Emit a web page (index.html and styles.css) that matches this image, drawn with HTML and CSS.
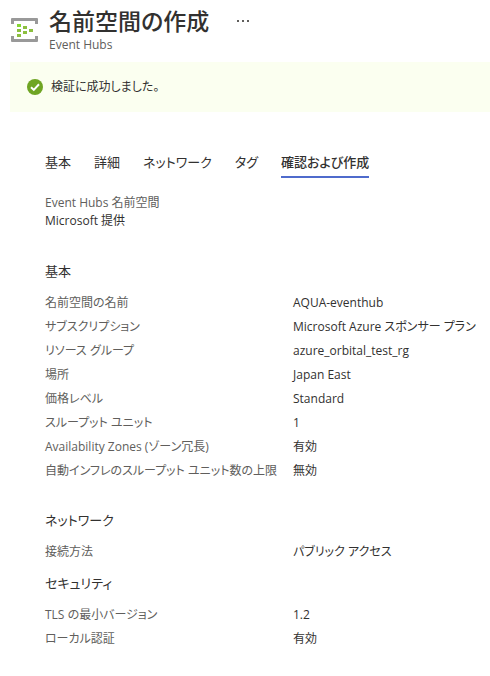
FILE: index.html
```html
<!DOCTYPE html>
<html lang="ja">
<head>
    <meta charset="UTF-8">
    <meta name="viewport" content="width=device-width, initial-scale=1.0">
    <title>名前空間の作成</title>
    <link rel="stylesheet" href="styles.css">
</head>
<body>
    <header class="header">
        <svg class="hub-icon" viewBox="0 0 28 24" aria-hidden="true">
            <path fill="#999" d="M2 0h25a1 1 0 0 1 1 1v5h-3V3H4v3H1V1a1 1 0 0 1 1-1zM1 18h3v3h21v-3h3v5a1 1 0 0 1-1 1H2a1 1 0 0 1-1-1z"/>
            <path fill="#86d633" d="M7 6h4v3H7z"/>
            <path fill="#8cbf3f" d="M7 11h4v3H7zM7 16h4v3H7zM13 8h4v3h-4zM13 13h4v3h-4zM19 11h4v3h-4z"/>
        </svg>
        <div class="heading">
            <div class="title-row">
                <h1>名前空間の作成</h1>
                <button class="more" type="button" aria-label="その他">
                    <svg viewBox="0 0 12 4" aria-hidden="true">
                        <path fill="#605e5c" d="M0 1h2v2H0zM5 1h2v2H5zM10 1h2v2h-2z"/>
                    </svg>
                </button>
            </div>
            <p class="subtitle">Event Hubs</p>
        </div>
    </header>

    <div class="banner" role="status">
        <svg class="check" viewBox="0 0 16 16" aria-hidden="true">
            <circle cx="8" cy="8" r="8" fill="#6fa523"/>
            <path fill="none" stroke="#fff" stroke-width="2" d="M4 8.2l2.8 2.7L12 5.3"/>
        </svg>
        <span>検証に成功しました。</span>
    </div>

    <main class="content">
        <nav class="tabs" role="tablist">
            <button class="tab" type="button" role="tab">基本</button>
            <button class="tab" type="button" role="tab">詳細</button>
            <button class="tab" type="button" role="tab">ネットワーク</button>
            <button class="tab" type="button" role="tab">タグ</button>
            <button class="tab active" type="button" role="tab" aria-selected="true">確認および作成</button>
        </nav>

        <div class="product">
            <p class="product-name">Event Hubs 名前空間</p>
            <p>Microsoft 提供</p>
        </div>

        <section class="section basics">
            <h2>基本</h2>
            <dl>
                <dt>名前空間の名前</dt>
                <dd>AQUA-eventhub</dd>
                <dt>サブスクリプション</dt>
                <dd>Microsoft Azure スポンサー プラン</dd>
                <dt>リソース グループ</dt>
                <dd>azure_orbital_test_rg</dd>
                <dt>場所</dt>
                <dd>Japan East</dd>
                <dt>価格レベル</dt>
                <dd>Standard</dd>
                <dt>スループット ユニット</dt>
                <dd>1</dd>
                <dt>Availability Zones (ゾーン冗長)</dt>
                <dd>有効</dd>
                <dt>自動インフレのスループット ユニット数の上限</dt>
                <dd>無効</dd>
            </dl>
        </section>

        <section class="section">
            <h2>ネットワーク</h2>
            <dl>
                <dt>接続方法</dt>
                <dd>パブリック アクセス</dd>
            </dl>
        </section>

        <section class="section">
            <h2>セキュリティ</h2>
            <dl>
                <dt>TLS の最小バージョン</dt>
                <dd>1.2</dd>
                <dt>ローカル認証</dt>
                <dd>有効</dd>
            </dl>
        </section>
    </main>
</body>
</html>
```
FILE: styles.css
```css
* {
    margin: 0;
    padding: 0;
    box-sizing: border-box;
}
body {
    font-family: "Open Sans", "Noto Sans CJK JP", sans-serif;
    font-feature-settings: "palt";
    font-size: 12px;
    line-height: 18px;
    color: #323130;
    background-color: #fff;
    padding: 6px 0 24px 10px;
}
button {
    font: inherit;
    font-feature-settings: inherit;
    color: inherit;
    background: none;
    border: none;
    cursor: pointer;
}
.header {
    display: flex;
    align-items: center;
    gap: 11px;
    height: 48px;
}
.hub-icon {
    width: 28px;
    height: 24px;
}
.title-row {
    display: flex;
    align-items: center;
    gap: 28px;
}
h1 {
    font-size: 23px;
    font-weight: 500;
    line-height: 30px;
}
.more {
    display: flex;
    padding: 4px 0;
}
.more svg {
    width: 12px;
    height: 4px;
}
.subtitle {
    color: #605e5c;
}
.banner {
    display: flex;
    align-items: center;
    gap: 8px;
    min-height: 50px;
    margin-top: 8px;
    padding: 0 17px;
    background-color: #fbfff0;
}
.check {
    width: 16px;
    height: 16px;
}
.content {
    padding: 36px 8px 0 35px;
}
.tabs {
    display: flex;
    gap: 23px;
}
.tab {
    font-size: 13px;
    line-height: 28px;
    border-bottom: 2px solid transparent;
    white-space: nowrap;
}
.tab.active {
    font-weight: 500;
    border-bottom-color: #4f6bcc;
}
.product {
    margin-top: 16px;
}
.product-name {
    color: #605e5c;
}
.section {
    margin-top: 9px;
}
.basics {
    margin: 31px 0 27px;
}
h2 {
    font-size: 13px;
    font-weight: 400;
    line-height: 20px;
    margin-bottom: 10px;
}
dl {
    display: grid;
    grid-template-columns: 248px 1fr;
    line-height: 24px;
}
dt {
    color: #605e5c;
}
```
